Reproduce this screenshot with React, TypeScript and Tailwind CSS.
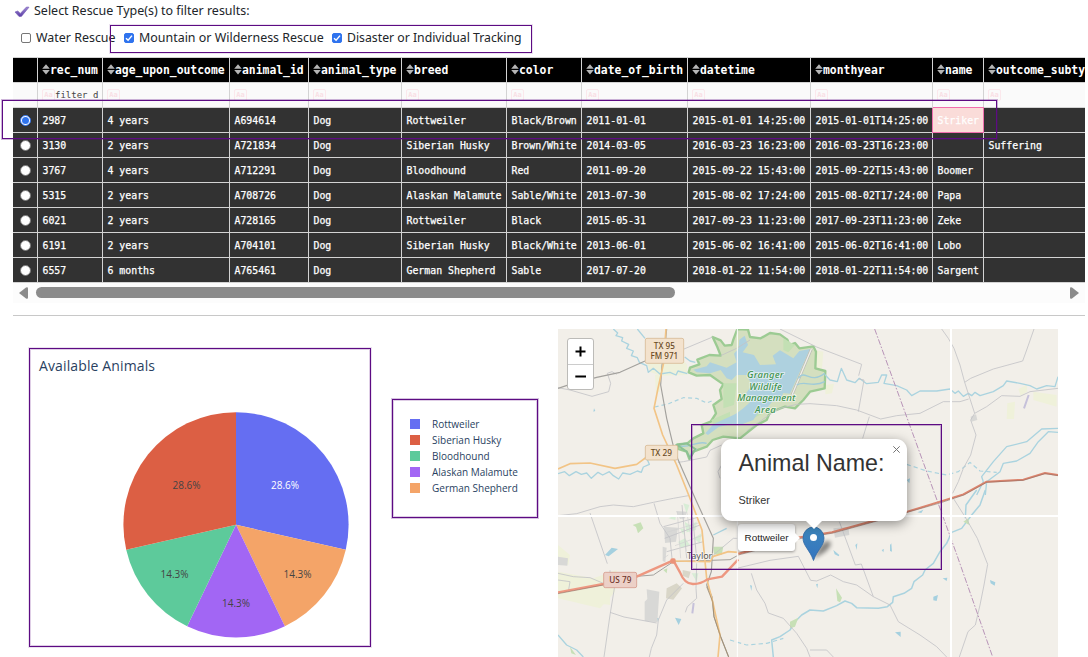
import type { ReactNode } from 'react';

const COLS = 'grid grid-cols-[25px_65px_127px_79px_93px_105px_75px_106px_123px_122px_51px_102px]';
const MONO = "font-['DejaVu_Sans_Mono',monospace]";
const SANS = "font-['Noto_Sans','Open_Sans',sans-serif]";

const headers = ['rec_num', 'age_upon_outcome', 'animal_id', 'animal_type', 'breed', 'color', 'date_of_birth', 'datetime', 'monthyear', 'name', 'outcome_subtype'];

const rows = [
  ['2987', '4 years', 'A694614', 'Dog', 'Rottweiler', 'Black/Brown', '2011-01-01', '2015-01-01 14:25:00', '2015-01-01T14:25:00', 'Striker', ''],
  ['3130', '2 years', 'A721834', 'Dog', 'Siberian Husky', 'Brown/White', '2014-03-05', '2016-03-23 16:23:00', '2016-03-23T16:23:00', '', 'Suffering'],
  ['3767', '4 years', 'A712291', 'Dog', 'Bloodhound', 'Red', '2011-09-20', '2015-09-22 15:43:00', '2015-09-22T15:43:00', 'Boomer', ''],
  ['5315', '2 years', 'A708726', 'Dog', 'Alaskan Malamute', 'Sable/White', '2013-07-30', '2015-08-02 17:24:00', '2015-08-02T17:24:00', 'Papa', ''],
  ['6021', '2 years', 'A728165', 'Dog', 'Rottweiler', 'Black', '2015-05-31', '2017-09-23 11:23:00', '2017-09-23T11:23:00', 'Zeke', ''],
  ['6191', '2 years', 'A704101', 'Dog', 'Siberian Husky', 'Black/White', '2013-06-01', '2015-06-02 16:41:00', '2015-06-02T16:41:00', 'Lobo', ''],
  ['6557', '6 months', 'A765461', 'Dog', 'German Shepherd', 'Sable', '2017-07-20', '2018-01-22 11:54:00', '2018-01-22T11:54:00', 'Sargent', ''],
];

const slices = [
  { from: 0, to: 2, color: '#636efa', text: '#ffffff', label: '28.6%', x: 285, y: 489 },
  { from: 2, to: 3, color: '#f4a468', text: '#444444', label: '14.3%', x: 297.5, y: 578 },
  { from: 3, to: 4, color: '#a266f4', text: '#444444', label: '14.3%', x: 236, y: 607 },
  { from: 4, to: 5, color: '#5dca9b', text: '#444444', label: '14.3%', x: 174.5, y: 578 },
  { from: 5, to: 7, color: '#dc5f44', text: '#444444', label: '28.6%', x: 186.5, y: 489 },
];

const legend: [string, string][] = [
  ['Rottweiler', 'bg-[#656ef2]'],
  ['Siberian Husky', 'bg-[#dc5f44]'],
  ['Bloodhound', 'bg-[#5dca9b]'],
  ['Alaskan Malamute', 'bg-[#a266f4]'],
  ['German Shepherd', 'bg-[#f4a468]'],
];

function slicePath(from: number, to: number) {
  const at = (k: number) => {
    const a = (k / 7) * Math.PI * 2;
    return `${236 + 112.6 * Math.sin(a)} ${524.8 - 112.6 * Math.cos(a)}`;
  };
  return `M236 524.8L${at(from)}A112.6 112.6 0 0 1 ${at(to)}Z`;
}

function Check({ on, label, size }: { on?: boolean; label: string; size: string }) {
  return (
    <label className="flex items-center whitespace-nowrap">
      <svg className="mr-[5px] h-[10px] w-[10px] shrink-0" viewBox="0 0 10 10">
        <rect x=".5" y=".5" width="9" height="9" rx="1.5" fill={on ? '#2f73ee' : '#fff'} stroke={on ? '#2f73ee' : '#767676'} />
        {on && <path d="M2 5.2L4.1 7.3L8 2.6" fill="none" stroke="#fff" strokeWidth="1.4" />}
      </svg>
      <span className={`${size} pt-px`}>{label}</span>
    </label>
  );
}

function SortIcon() {
  return (
    <svg className="mb-[2px] h-[11px] w-[8px] shrink-0" viewBox="0 0 8 11">
      <path d="M.2 4.7L4 .3L7.8 4.7ZM.2 6.1L4 10.5L7.8 6.1Z" fill="#b5b5b5" />
    </svg>
  );
}

function Grid() {
  return (
    <div className={`${MONO} w-[1072px] overflow-hidden border-t border-[#d3d3d3]`}>
      <div className={`${COLS} h-[25px] bg-black text-[11.38px] font-bold text-white`}>
        <div className="border-r border-b border-[#d3d3d3]" />
        {headers.map((h) => (
          <div key={h} className="flex items-center overflow-hidden border-r border-b border-[#d3d3d3] pl-[4px] whitespace-nowrap last:border-r-0">
            <SortIcon />
            <span className="pt-[2px]">{h}</span>
          </div>
        ))}
      </div>
      <div className={`${COLS} h-[25px] bg-[#fafafa] text-[9px] text-[#444]`}>
        <div className="border-r border-b border-[#d3d3d3]" />
        {headers.map((h, i) => (
          <div key={h} className="flex items-center overflow-hidden border-r border-b border-[#d3d3d3] pl-[4px] whitespace-nowrap last:border-r-0">
            <span className="flex h-[12px] w-[13px] shrink-0 items-center justify-center rounded-[2px] border border-[#fbe8ec] text-[7px] font-bold text-[#f9dfe5]">Aa</span>
            {i === 0 && <span className="pt-[2px]">filter d</span>}
          </div>
        ))}
      </div>
      {rows.map((r, ri) => (
        <div key={r[0]} className={`${COLS} h-[25px] bg-[#323232] text-[9.87px] text-white [-webkit-text-stroke:0.25px_white]`}>
          <div className="flex items-center justify-center border-r border-b border-[#d3d3d3]">
            {ri === 0 ? (
              <span className="flex h-[11px] w-[11px] items-center justify-center rounded-full border-[1.5px] border-[#2f73ee] bg-white">
                <span className="h-[7px] w-[7px] rounded-full bg-[#2f73ee]" />
              </span>
            ) : (
              <span className="h-[11px] w-[11px] rounded-full border border-[#777] bg-white" />
            )}
          </div>
          {r.map((c, ci) => (
            <div
              key={ci}
              className={
                ri === 0 && ci === 9
                  ? 'flex items-center border-r border-b border-[#f06fae] bg-[#fadcd9] pt-[2px] pl-[4.5px] whitespace-nowrap shadow-[-1px_0_0_#f06fae,0_-1px_0_#f06fae]'
                  : 'flex items-center border-r border-b border-[#d3d3d3] pt-[2px] pl-[4.5px] whitespace-nowrap last:border-r-0'
              }
            >
              {c}
            </div>
          ))}
        </div>
      ))}
      <div className="flex h-[20px] items-center bg-[#fcfcfc] pb-px">
        <svg className="mx-[6px] h-[12px] w-[9px]" viewBox="0 0 9 12"><path d="M0 6L7 .5Q9 -.5 9 1.5V10.5Q9 12.5 7 11.5Z" fill="#8b8b8b" /></svg>
        <div className="ml-[2px] h-[11px] w-[639px] rounded-full bg-[#8b8b8b]" />
        <svg className="mr-[6px] ml-auto h-[12px] w-[9px]" viewBox="0 0 9 12"><path d="M9 6L2 .5Q0 -.5 0 1.5V10.5Q0 12.5 2 11.5Z" fill="#8b8b8b" /></svg>
      </div>
    </div>
  );
}

function Road({ d, c = '#c3c3c6', w = 3, dash }: { d: string; c?: string; w?: number; dash?: string }) {
  return <path d={d} fill="none" stroke={c} strokeWidth={w} strokeLinejoin="round" strokeLinecap="butt" strokeDasharray={dash} />;
}

const W = '#aad3df';

function Shield({ x, y, w, h, red, children }: { x: number; y: number; w: number; h: number; red?: boolean; children: ReactNode }) {
  return (
    <g>
      <rect x={x} y={y} width={w} height={h} rx="5" fill={red ? '#ecd0c7' : '#f3e2cd'} stroke={red ? '#d59c8e' : '#d8bc96'} strokeWidth="2.5" />
      {children}
    </g>
  );
}

function MapTiles() {
  return (
    <svg className="block h-[328px] w-[500px]" viewBox="24 12 1500 984" fontFamily="'Noto Sans','Open Sans',sans-serif">
      <rect x="24" y="12" width="1500" height="984" fill="#f2efe9" />
      {/* fields and parkland */}
      <g fill="#eff1da">
        <path d="M290 110L380 80L412 120L410 150L330 152L300 140ZM315 150L334 150L330 200L318 205ZM24 740L130 760L200 735L195 800L150 850L24 820Z" />
        <path d="M795 75L820 80L816 130L800 130ZM826 180L852 176L846 205L826 208ZM1405 192L1430 180L1432 200L1412 212ZM1450 200L1520 210L1520 245L1450 225ZM1372 235L1395 230L1392 282L1370 282ZM24 660L60 690L55 720L24 710ZM100 795L180 790L180 840L110 830Z" />
      </g>
      <path d="M488 36L512 46L524 62L545 60L550 44L562 12L594 14L600 36L632 40L660 24L690 28L712 44L718 60L735 54L748 70L790 64L798 80L796 130L826 138L824 190L780 200L760 225L735 250L705 245L660 262L650 285L620 300L570 340L520 335L488 345L470 365L430 380L418 402L410 380L384 372L382 358L412 355L430 340L460 325L455 300L482 290L498 265L490 240L515 222L510 195L520 178L480 150L440 152L416 142L420 128L448 118L442 104L478 90L512 92L502 66Z" fill="#d4dfbf" stroke="#9ccb93" strokeWidth="7" strokeLinejoin="round" />
      <g fill="#c3e0b4">
        <path d="M520 175L560 175L552 240L520 250ZM575 255L640 265L600 285L570 270ZM700 40L735 60L715 82L700 75ZM484 285L540 260L540 290L490 300Z" />
      </g>
      <path d="M568 44L584 32L594 60L578 82L612 90L630 120L678 118L668 92L690 76L730 100L748 78L780 72L720 206L700 204L690 225L665 232L650 250L625 262L610 285L570 300L548 296L506 306L474 330L466 325L490 298L550 270L560 265L580 250L600 232L588 205L606 180L590 150L560 150L545 165L530 160L512 135L480 145L440 142L430 134L470 124L480 112L530 128L560 112L552 86L566 70Z" fill="#aed1df" />
      <path d="M784 72L726 210" stroke="#b9b9b4" strokeWidth="8" />
      <path d="M784 72L726 210" stroke="#efefe8" strokeWidth="4" />
      <Road d="M745 160C765 130 780 180 824 145M740 180C765 165 790 190 824 170M384 362C420 372 440 345 470 355M418 392L440 372" c="#9fcbd8" w={4} />
      <path d="M382 360L410 355L436 372L420 400L410 380Z" fill="none" stroke="#8cc193" strokeWidth="6" />
      {/* waterways */}
      <Road w={4} c={W} d="M190 12L203 24L198 32L218 38L215 48L236 58L230 70L250 78L244 92L262 98L268 112L290 122L295 142L310 130L330 147L360 142L378 150L384 138L412 146M262 12L285 40M404 96L420 108L436 112" />
      <Road w={4} c={W} d="M24 446L44 440L58 452L78 440L94 448L110 444L124 460L144 442L158 450L178 440L190 452L206 462L218 444L240 448L262 438L274 442L280 426L298 418L290 400L304 396" />
      <Road w={3.5} c={W} dash="12 9" d="M314 246L356 236L400 218L440 220L470 234L490 226" />
      <Road w={4} c={W} d="M824 148L840 165L862 170L874 130L890 165L915 173L928 160L950 176L985 172L995 150L1010 150L1002 175L1040 182L1070 195L1085 212L1110 198L1160 198L1200 192L1215 205L1225 198L1240 214L1255 205L1265 212L1275 202L1290 212L1330 200L1360 182L1370 168L1410 175L1440 182L1460 192L1490 182L1515 185L1524 155" />
      <Road w={4} c={W} d="M1280 510L1300 470L1295 455L1330 410L1370 365L1430 350L1475 312L1524 310M1306 510L1310 470L1350 440L1360 415L1400 408L1440 385L1465 350L1495 320L1524 322" />
      <Road w={3.5} c={W} dash="13 9" d="M1070 418L1130 438L1190 450L1225 440L1260 412L1290 438L1340 442M540 945L590 960L650 955L700 940" />
      <Road w={4.5} c={W} d="M1306 495L1290 540L1265 570L1250 590L1235 610L1205 622L1190 655L1170 680L1150 715L1125 735L1118 750L1092 770L1085 790L1062 805L1030 815L1028 832L1012 845L985 850L920 848L905 835L885 828L860 842L820 858L780 855L755 870L735 890L720 915L690 935L665 945L670 996M1280 495L1248 540L1246 580" />
      <Road w={4} c={W} d="M24 930L50 960L80 975L100 996M490 630L530 610" />
      <g fill="#a5d0df">
        <path d="M165 690L185 668L204 672L176 694ZM375 878L394 882L386 900ZM1035 922L1052 920L1052 936ZM1150 815L1164 810L1160 828L1150 826ZM1178 760L1192 758L1190 768ZM1320 765L1336 772L1334 782L1322 775ZM850 675L868 690L866 694L854 688ZM1020 660L1024 655L1026 680L1020 678ZM916 660L922 655L920 675ZM995 675L1002 672L1000 682ZM1102 562L1120 554L1114 564ZM798 778L804 776L802 790ZM132 250L136 258L130 260ZM320 878L326 880L324 890ZM600 780L606 782L604 798ZM1070 465L1080 460L1078 475Z" />
      </g>
      <g fill="#c7e0b6"><path d="M248 600L272 592L280 610L264 625L258 606ZM858 790L876 818L870 832L862 828ZM720 890L745 878L735 905L720 910ZM490 665L520 665L515 690L492 688ZM340 735L352 730L350 745ZM1240 590L1255 580L1258 600ZM60 965L78 990L64 985Z" /></g>
      {/* built-up areas */}
      <g fill="#d8d8d6">
        <path d="M290 793L328 800L322 892L284 888L284 830L292 822ZM342 605L384 608L378 650L345 654ZM338 665L350 668L346 712L338 708ZM24 695L54 700L52 722L24 720ZM850 610L895 605L898 630L855 638ZM1262 275L1278 268L1282 285L1264 290ZM378 558L410 560L405 580L390 582Z" />
        <path d="M350 790L380 775L396 790L370 824L348 820ZM398 735L422 740L416 760L398 752Z" fill="#d9d6c8" />
      </g>
      <g fill="#cfeccf" opacity=".75"><path d="M404 590L420 600L440 590L438 615L410 622ZM385 650L405 640L420 660L392 668ZM430 640L455 625L450 655ZM355 580L378 570L376 585ZM400 535L418 540L410 565ZM425 745L445 745L440 770ZM390 610L404 612L400 630Z" /></g>
      {/* minor roads */}
      <Road w={2.5} d="M24 188L60 195L126 214L176 200L182 175L172 145L186 140L200 148M402 72L488 36M512 92L560 70L600 45M690 12L800 66L935 118L926 152M926 162L942 165L925 260M590 318L650 275L690 250L740 238L780 236L860 242L920 255L992 282L1040 272L1110 265L1180 230L1200 230L1230 230L1256 222M1175 12L1195 40L1212 70L1230 120L1244 172L1274 265L1262 285L1278 330L1262 390L1240 430L1225 470L1208 505M1244 172L1262 160L1330 132L1418 108L1430 75L1452 12M1274 265L1310 245L1355 212L1410 214L1440 200L1524 190M958 275L938 340M384 412L400 410L470 396L480 376L515 360M515 420L504 440L510 460" />
      <Road w={2.5} d="M24 572L80 566L150 545L190 540L250 545L310 532L370 520L415 512M120 564L172 716M180 736L180 752M312 535L330 595L360 640L366 700M195 778L180 870L162 996M180 862L222 876L320 894M400 775L350 825L325 885L320 930L304 970L298 996M340 605L440 578M344 640L450 600M350 680L460 650M396 540L410 700M424 535L440 700M440 715L438 790L440 820L412 845L406 862M490 690L550 640L600 640M560 730L660 706L745 694L782 766L800 768L842 750L880 770L920 780L970 815L1020 840L1045 890L1110 930L1160 965L1190 996M604 745L620 795L645 835L655 864L700 880L740 925L770 970L780 996M868 590L916 720L934 717L970 815M1210 520L1248 580L1282 640L1313 718L1302 780L1290 840L1276 900L1254 920L1228 996M24 745L70 755L120 758L160 775M24 765L60 770L55 800M780 975L830 975L850 996" />
      <Road w={2} c="#d2d2d2" d="M350 622L445 594M375 662L455 632M382 560L392 700M410 560L424 640L420 700M340 700L355 690" />
      <Road w={3.5} c="#a3a19d" d="M24 190L60 178L140 157L210 142L285 108M350 12L344 75L336 120L332 180L350 280L374 380L400 440L440 530L490 640L484 740L470 780L486 815L492 875L512 935L536 996" />
      <Road w={3} c="#a3a19d" d="M260 754L310 750L370 710L540 704L562 692" />
      <Road w={3} c="#b894b8" dash="18 5 5 5" d="M974 12L1150 495L1220 688L1328 996" />
      {/* highways */}
      <Road w={5} c="#f2c486" d="M348 12L340 118L324 190L312 250L338 330L380 420L416 510L456 615L470 760L488 830L510 930L504 996M24 432L60 416L120 414L195 430L260 418L290 396M370 708L480 710L490 694L535 680L565 682" />
      <Road w={2.5} c="#a18c6e" d="M470 785L488 830L492 875L512 935L536 996" />
      <Road w={7} c="#ed9780" d="M24 802L160 777L260 755L370 706L390 742Q404 778 430 777Q452 777 472 763L516 755L565 703" />
      <Road w={6} c="#dc846d" d="M565 686L750 637L846 622L960 590L1072 560L1170 530L1240 508L1310 470L1420 464L1485 444L1524 450" />
      <Road w={1.7} c="#8b6b61" d="M24 806L160 780M565 690L750 641L850 624L970 591L1170 534L1242 510L1310 472L1420 466L1485 446L1524 452" />
      <rect x="361" y="700" width="16" height="16" rx="5" fill="#eb9378" />
      <path d="M1422 250L1436 210M427 865L431 834" stroke="#c6c1da" strokeWidth="6" />
      {/* tile seams */}
      <g stroke="#fff">
        <path d="M562 12V996" strokeWidth="3" />
        <path d="M1203 12V996M24 573H1524" strokeWidth="6" />
      </g>
      <Shield x={286} y={40} w={115} h={75}>
        <text x="343" y="72" fontSize="26" fontWeight="500" fill="#6b4b24" textAnchor="middle" textLength="63" lengthAdjust="spacingAndGlyphs">TX 95</text>
        <text x="343" y="102" fontSize="26" fontWeight="500" fill="#6b4b24" textAnchor="middle" textLength="83" lengthAdjust="spacingAndGlyphs">FM 971</text>
      </Shield>
      <Shield x={286} y={361} w={97} h={44}>
        <text x="334" y="394" fontSize="26" fontWeight="500" fill="#6b4b24" textAnchor="middle" textLength="64" lengthAdjust="spacingAndGlyphs">TX 29</text>
      </Shield>
      <Shield x={161} y={742} w={99} h={46} red>
        <text x="211" y="775" fontSize="26" fontWeight="500" fill="#6d3329" textAnchor="middle" textLength="66" lengthAdjust="spacingAndGlyphs">US 79</text>
      </Shield>
      <g fontSize="28.5" fontWeight="500" fontStyle="italic" fill="#3f9450" stroke="#fff" strokeOpacity=".65" strokeWidth="5" paintOrder="stroke" textAnchor="middle">
        <text x="646" y="158" textLength="110">Granger</text>
        <text x="647" y="194" textLength="98">Wildlife</text>
        <text x="649" y="229" textLength="174" lengthAdjust="spacingAndGlyphs">Management</text>
        <text x="646" y="265" textLength="62">Area</text>
      </g>
      <text x="449" y="701" fontSize="29" fill="#555" stroke="#fff" strokeOpacity=".6" strokeWidth="5" paintOrder="stroke" textAnchor="middle" textLength="76" lengthAdjust="spacingAndGlyphs">Taylor</text>
    </svg>
  );
}

function MapPanel() {
  return (
    <div className="relative h-[328px] w-[500px] overflow-hidden font-['Liberation_Sans',Arial,sans-serif]">
      <MapTiles />
      <div className="absolute top-[9px] left-[9px] flex h-[52px] w-[27px] flex-col rounded-[3px] border border-[#bcbbb8] bg-white">
        <div className="flex flex-1 items-center justify-center border-b border-[#ccc]">
          <svg className="h-[11px] w-[11px]" viewBox="0 0 11 11"><path d="M5.5 .5V10.5M.5 5.5H10.5" stroke="#000" strokeWidth="2" /></svg>
        </div>
        <div className="flex flex-1 items-center justify-center">
          <svg className="h-[11px] w-[11px]" viewBox="0 0 11 11"><path d="M.3 5.5H11" stroke="#000" strokeWidth="2" /></svg>
        </div>
      </div>
      <svg className="absolute top-[190px] left-[235px] h-[45px] w-[55px]" viewBox="793 519 55 45">
        <defs>
          <linearGradient id="pin" x1="0" y1="0" x2="0" y2="1"><stop offset="0" stopColor="#3d86bb" /><stop offset="1" stopColor="#3474c0" /></linearGradient>
          <filter id="soft" x="-30%" y="-30%" width="160%" height="160%"><feGaussianBlur stdDeviation="2" /></filter>
        </defs>
        <path d="M813.5 559L819 548Q824 540 829 541Q834 544 825 552Z" fill="#000" opacity=".45" filter="url(#soft)" />
        <path d="M813.5 560.5C810 550 803 546 803 538A10.5 11 0 0 1 824 538C824 546 817 550 813.5 560.5Z" fill="url(#pin)" stroke="#3068a4" strokeWidth=".8" />
        <circle cx="813.5" cy="537.6" r="3.5" fill="#fff" />
      </svg>
      <div className="absolute top-[195px] left-[180px] flex h-[27px] w-[57px] items-center justify-center rounded-[3px] bg-white pt-px text-[9.9px] text-[#222] shadow-[0_1px_3px_rgba(0,0,0,0.4)]">
        Rottweiler
        <span className="absolute top-[9px] left-[57px] border-y-[5px] border-l-[5px] border-y-transparent border-l-white" />
      </div>
      <div className="absolute top-[110px] left-[163px] h-[82px] w-[186px] rounded-[11px] bg-white pt-[10px] pl-[17.5px] text-[#333] shadow-[0_3px_12px_rgba(0,0,0,0.42)]">
        <div className="text-[23.25px] leading-[28px] whitespace-nowrap">Animal Name:</div>
        <div className="mt-[16px] text-[10.9px] leading-[15px]">Striker</div>
        <svg className="absolute top-[7px] right-[7px] h-[7px] w-[7px]" viewBox="0 0 7 7"><path d="M.3 .3L6.7 6.7M6.7 .3L.3 6.7" stroke="#757575" /></svg>
        <svg className="absolute top-[82px] left-[85px] h-[8px] w-[16px]" viewBox="0 0 16 8"><path d="M0 0H16L8 8Z" fill="#fff" /></svg>
      </div>
    </div>
  );
}

function Outline({ place }: { place: string }) {
  return <div className={`pointer-events-none absolute border border-[#5d0b83] ${place}`} />;
}

export default function App() {
  return (
    <div className={`${SANS} relative h-[657px] w-[1088px] overflow-hidden bg-white text-[#212529]`}>
      <div className="flex h-[22px] items-center pl-[14px]">
        <svg className="mr-[4px] h-[14px] w-[16px]" viewBox="0 0 16 14">
          <defs><linearGradient id="tick" x1="0" y1="0" x2="0" y2="1"><stop offset="0" stopColor="#a08bd4" /><stop offset="1" stopColor="#5a3da5" /></linearGradient></defs>
          <path d="M1 8L3.8 7L6.3 9.4L12.5 3L15 3.2L7.4 12.4L5.1 12.6Z" fill="url(#tick)" stroke="#7458b5" strokeWidth=".6" />
        </svg>
        <span className="text-[12.48px] leading-[20px] whitespace-nowrap">Select Rescue Type(s) to filter results:</span>
      </div>
      <div className="flex h-[35px] items-center gap-[8px] pb-[3px] pl-[21px]">
        <Check size="w-[80px] text-[12.45px]" label="Water Rescue" />
        <Check on size="w-[185px] text-[12.45px]" label="Mountain or Wilderness Rescue" />
        <Check on size="text-[12.25px]" label="Disaster or Individual Tracking" />
      </div>
      <div className="ml-[13px]">
        <Grid />
        <div className="mt-[12px] w-[1072px] border-t border-[#c8c8c8]" />
      </div>
      <div className="flex pt-[13px]">
        <div className="flex h-[328px] w-[558px]">
          <div className="h-[328px] w-[392px]">
            <svg className="block h-[328px] w-[392px]" viewBox="0 329 392 328" fontFamily="'Open Sans','Noto Sans',sans-serif">
              <text x="39" y="371" fontSize="14" fill="#2a3f5f" textLength="116">Available Animals</text>
              {slices.map((s) => (
                <g key={s.from}>
                  <path d={slicePath(s.from, s.to)} fill={s.from === 0 ? '#656ef2' : s.color} />
                  <text x={s.x} y={s.y} fontSize="10" fill={s.text} textAnchor="middle" textLength="28">{s.label}</text>
                </g>
              ))}
            </svg>
          </div>
          <div className="mt-[87px] ml-[18px] flex flex-col font-['Open_Sans',sans-serif] text-[10px] text-[#2a3f5f]">
            {legend.map(([name, color]) => (
              <div key={name} className="flex h-[16px] items-center whitespace-nowrap">
                <span className={`mr-[12px] h-[10px] w-[10px] ${color}`} />
                {name}
              </div>
            ))}
          </div>
        </div>
        <MapPanel />
      </div>
      <Outline place="left-[110px] top-[25px] h-[28px] w-[422px] shadow-[0_0_0_1px_rgba(93,11,131,0.12)]" />
      <Outline place="left-[2px] top-[100px] h-[39px] w-[995px] shadow-[0_0_0_1px_rgba(93,11,131,0.3)]" />
      <Outline place="left-[29px] top-[348px] h-[299px] w-[342px] shadow-[0_0_0_1px_rgba(93,11,131,0.12),inset_0_0_0_1px_rgba(93,11,131,0.2)]" />
      <Outline place="left-[392px] top-[399px] h-[119px] w-[146px] shadow-[0_0_0_1px_rgba(93,11,131,0.25),inset_0_0_0_1px_rgba(93,11,131,0.2)]" />
      <Outline place="left-[691px] top-[424px] h-[146px] w-[251px] shadow-[inset_0_0_0_1px_rgba(93,11,131,0.3)]" />
    </div>
  );
}
